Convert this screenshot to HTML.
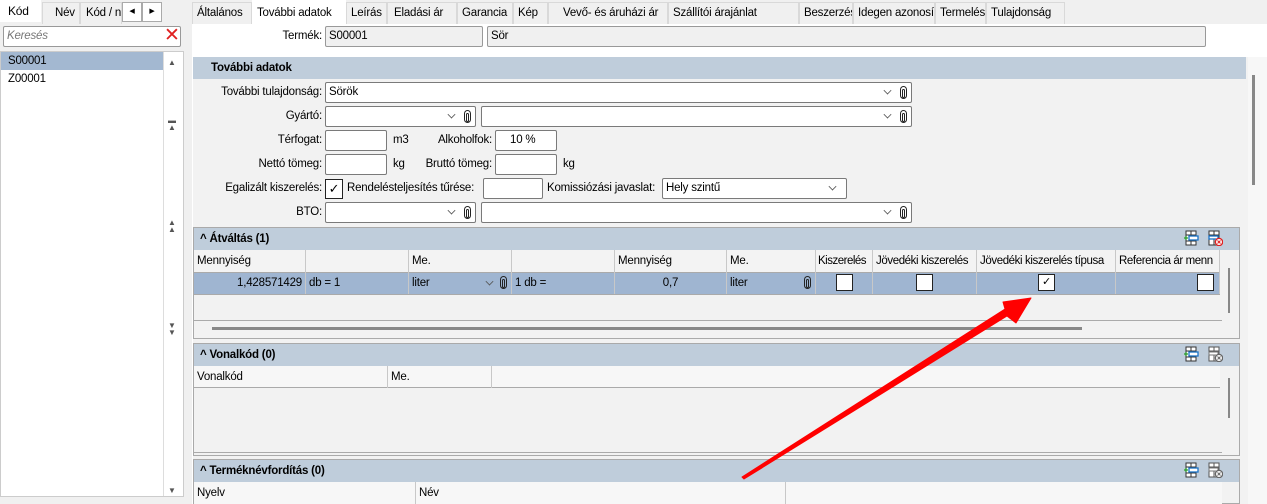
<!DOCTYPE html>
<html><head><meta charset="utf-8"><style>
*{box-sizing:border-box;margin:0;padding:0}
body{width:1267px;height:504px;overflow:hidden;background:#f0f0f0;font-family:"Liberation Sans",sans-serif;font-size:11.5px;letter-spacing:-0.2px;color:#000;position:relative}
.a{position:absolute}
.tab{position:absolute;top:2px;height:22px;line-height:20px;background:#f0f0f0;border:1px solid #d9d9d9;border-bottom:none;text-align:left;padding-left:4px;white-space:nowrap;overflow:hidden}
.inp{position:absolute;height:21px;background:#fff;border:1px solid #7a7a7a;border-radius:2px;padding-left:3px;line-height:19px;white-space:nowrap;overflow:hidden}
.lbl{position:absolute;text-align:right;white-space:nowrap;line-height:20px}
.dd{position:absolute;right:20px;top:4px;width:7px;height:7px;border-right:1px solid #555;border-bottom:1px solid #555;transform:rotate(45deg) scale(.8)}
.clip{position:absolute;right:4px;top:3px;width:7px;height:13px;border:1.5px solid #222;border-radius:4px}
.clip:after{content:"";position:absolute;left:1px;top:2px;width:1px;height:7px;border:1px solid #222;border-radius:2px}
.hdr{position:absolute;background:#bfcddb;font-weight:bold;line-height:22px;padding-left:6px}
.gh{position:absolute;top:0;height:22px;border-right:1px solid #c8c8c8;line-height:22px;padding-left:3px;white-space:nowrap;overflow:hidden;background:#f3f3f3}
.gr{position:absolute;height:22px;border-right:1px solid #c8c8c8;line-height:22px;padding:0 3px;white-space:nowrap;overflow:hidden}
.cb{position:absolute;width:17px;height:17px;background:#fff;border:1px solid #222}
.ic{position:absolute;width:16px;height:16px}
.ar{position:absolute;left:168px;font-size:8px;color:#555;line-height:7px;letter-spacing:0}
</style></head><body>
<div class="a" style="left:0;top:0;width:186px;height:504px;background:#f0f0f0"></div>
<div class="tab" style="left:0;top:0;width:41px;background:#fff;border-color:#fff;padding-left:7px;font-size:12px">Kód</div>
<div class="tab" style="left:42px;top:2px;width:38px;padding-left:12px">Név</div>
<div class="tab" style="left:80px;top:2px;width:42px;padding-left:5px">Kód / né</div>
<div class="a" style="left:122px;top:2px;width:20px;height:20px;background:#fff;border:1px solid #aaa;font-size:7px;text-align:center;line-height:18px">◀</div>
<div class="a" style="left:142px;top:2px;width:20px;height:20px;background:#fff;border:1px solid #aaa;font-size:7px;text-align:center;line-height:18px">▶</div>
<div class="inp" style="left:3px;top:26px;width:178px;height:21px;border-color:#999;color:#777;font-style:italic">Keresés</div>
<div class="a" style="left:164px;top:26px;font-size:19px;color:#e02020;line-height:20px">✕</div>
<div class="a" style="left:0;top:51px;width:184px;height:446px;background:#fff;border:1px solid #ccc"></div>
<div class="a" style="left:1px;top:52px;width:162px;height:18px;background:#a3b8d1;padding-left:7px;line-height:18px">S00001</div>
<div class="a" style="left:1px;top:70px;width:162px;height:18px;padding-left:7px;line-height:18px">Z00001</div>
<div class="a" style="left:163px;top:52px;width:20px;height:444px;border-left:1px solid #ddd;background:#fff"></div>
<div class="ar" style="top:59px">▲</div>
<div class="ar" style="top:117px">▬<br>▲</div>
<div class="ar" style="top:219px">▲<br>▲</div>
<div class="ar" style="top:322px">▼<br>▼</div>
<div class="ar" style="top:487px">▼</div>

<div class="tab" style="left:192px;width:60px">Általános</div>
<div class="tab" style="left:252px;top:0;height:25px;width:94px;background:#fff;border-color:#fff;padding-top:2px">További adatok</div>
<div class="tab" style="left:346px;width:41px">Leírás</div>
<div class="tab" style="left:387px;width:70px;padding-left:6px">Eladási ár</div>
<div class="tab" style="left:457px;width:56px">Garancia</div>
<div class="tab" style="left:513px;width:35px">Kép</div>
<div class="tab" style="left:548px;width:120px;padding-left:14px">Vevő- és áruházi ár</div>
<div class="tab" style="left:668px;width:131px">Szállítói árajánlat</div>
<div class="tab" style="left:799px;width:54px">Beszerzés</div>
<div class="tab" style="left:853px;width:82px">Idegen azonosító</div>
<div class="tab" style="left:935px;width:51px">Termelés</div>
<div class="tab" style="left:986px;width:79px">Tulajdonság</div>

<div class="a" style="left:192px;top:24px;width:1075px;height:480px;background:#fff"></div>
<div class="lbl" style="left:200px;width:122px;top:26px">Termék:</div>
<div class="inp" style="left:325px;top:26px;width:158px;background:#f0f0f0;border-color:#999">S00001</div>
<div class="inp" style="left:487px;top:26px;width:719px;background:#f0f0f0;border-color:#999">Sör</div>

<div class="a" style="left:193px;top:57px;width:1055px;height:447px;background:#f2f2f2"></div>
<div class="a" style="left:1248px;top:57px;width:19px;height:447px;background:#f7f7f7"></div>
<div class="a" style="left:1252px;top:75px;width:3px;height:110px;background:#888"></div>
<div class="hdr" style="left:193px;top:57px;width:1053px;height:22px;padding-left:18px">További adatok</div>

<div class="lbl" style="left:200px;width:122px;top:82px">További tulajdonság:</div>
<div class="inp" style="left:325px;top:82px;width:587px">Sörök<span class="dd"></span><span class="clip"></span></div>
<div class="lbl" style="left:200px;width:122px;top:106px">Gyártó:</div>
<div class="inp" style="left:325px;top:106px;width:151px"><span class="dd"></span><span class="clip"></span></div>
<div class="inp" style="left:481px;top:106px;width:431px"><span class="dd"></span><span class="clip"></span></div>
<div class="lbl" style="left:200px;width:122px;top:130px">Térfogat:</div>
<div class="inp" style="left:325px;top:130px;width:62px"></div>
<div class="lbl" style="left:393px;top:130px">m3</div>
<div class="lbl" style="left:400px;width:92px;top:130px">Alkoholfok:</div>
<div class="inp" style="left:495px;top:130px;width:62px;padding-left:14px">10 %</div>
<div class="lbl" style="left:200px;width:122px;top:154px">Nettó tömeg:</div>
<div class="inp" style="left:325px;top:154px;width:62px"></div>
<div class="lbl" style="left:393px;top:154px">kg</div>
<div class="lbl" style="left:400px;width:92px;top:154px">Bruttó tömeg:</div>
<div class="inp" style="left:495px;top:154px;width:62px"></div>
<div class="lbl" style="left:563px;top:154px">kg</div>
<div class="lbl" style="left:200px;width:122px;top:178px">Egalizált kiszerelés:</div>
<div class="cb" style="left:325px;top:179px;width:18px;height:20px;font-size:13px;text-align:center;line-height:18px">✓</div>
<div class="lbl" style="left:347px;top:178px">Rendelésteljesítés tűrése:</div>
<div class="inp" style="left:483px;top:178px;width:60px"></div>
<div class="lbl" style="left:547px;top:178px">Komissiózási javaslat:</div>
<div class="inp" style="left:662px;top:178px;width:185px">Hely szintű<span class="dd" style="right:10px"></span></div>
<div class="lbl" style="left:200px;width:122px;top:202px">BTO:</div>
<div class="inp" style="left:325px;top:202px;width:151px"><span class="dd"></span><span class="clip"></span></div>
<div class="inp" style="left:481px;top:202px;width:431px"><span class="dd"></span><span class="clip"></span></div>

<div class="a" style="left:193px;top:227px;width:1047px;height:112px;border:1px solid #aaa;background:#f2f2f2"></div>
<div class="hdr" style="left:194px;top:228px;width:1045px;height:22px">^ Átváltás (1)</div>
<svg class="ic" style="left:1183px;top:230px" viewBox="0 0 16 16"><rect x="3" y="1" width="10" height="14" fill="#fff" stroke="#333"/><path d="M3 5h10M3 11h10M8 1v14" stroke="#333"/><rect x="6" y="6" width="9" height="4" fill="#fff" stroke="#1a73c7" stroke-width="1.3"/><path d="M1 8h4M3 6v4" stroke="#2a9a2a" stroke-width="1.3"/></svg>
<svg class="ic" style="left:1207px;top:230px" viewBox="0 0 16 16"><rect x="2" y="1" width="10" height="14" fill="#fff" stroke="#333"/><path d="M2 5h10M7 1v14" stroke="#333"/><rect x="2" y="6" width="9" height="3" fill="#fff" stroke="#1a73c7" stroke-width="1.3"/><circle cx="12" cy="12" r="3.6" fill="#fff" stroke="#e02020" stroke-width="1.3"/><path d="M10.5 10.5l3 3M13.5 10.5l-3 3" stroke="#e02020"/></svg>
<div class="a" style="left:194px;top:250px;width:1028px;height:71px;background:#f2f2f2;border-bottom:1px solid #aaa;overflow:hidden">
<div class="gh" style="left:0;width:112px">Mennyiség</div><div class="gh" style="left:112px;width:103px"></div><div class="gh" style="left:215px;width:103px">Me.</div><div class="gh" style="left:318px;width:103px"></div><div class="gh" style="left:421px;width:112px">Mennyiség</div><div class="gh" style="left:533px;width:89px">Me.</div><div class="gh" style="left:622px;width:57px;padding-left:2px;letter-spacing:-0.5px">Kiszerelés</div><div class="gh" style="left:679px;width:104px;letter-spacing:-0.4px">Jövedéki kiszerelés</div><div class="gh" style="left:783px;width:139px;letter-spacing:-0.4px">Jövedéki kiszerelés típusa</div><div class="gh" style="left:922px;width:104px;letter-spacing:-0.4px">Referencia ár menn</div>
<div class="a" style="left:0;top:22px;width:1026px;height:23px;background:#9fb5d1;border-top:1px solid #aaa;border-bottom:1px solid #aaa"></div>
<div class="gr" style="left:0;top:22px;width:112px;text-align:right">1,428571429</div><div class="gr" style="left:112px;top:22px;width:103px">db = 1</div><div class="gr" style="left:215px;top:22px;width:103px">liter<span class="dd" style="right:18px;top:6px"></span><span class="clip" style="top:4px"></span></div><div class="gr" style="left:318px;top:22px;width:103px">1 db =</div><div class="gr" style="left:421px;top:22px;width:112px;text-align:center">0,7</div><div class="gr" style="left:533px;top:22px;width:89px">liter<span class="clip" style="top:4px"></span></div><div class="gr" style="left:622px;top:22px;width:57px"></div><div class="gr" style="left:679px;top:22px;width:104px"></div><div class="gr" style="left:783px;top:22px;width:139px"></div><div class="gr" style="left:922px;top:22px;width:104px"></div>
<div class="cb" style="left:642px;top:24px"></div><div class="cb" style="left:722px;top:24px"></div><div class="cb" style="left:844px;top:24px;font-size:11px;text-align:center;line-height:15px">✓</div><div class="cb" style="left:1003px;top:24px"></div>
</div>
<div class="a" style="left:1228px;top:268px;width:2px;height:45px;background:#888"></div>
<div class="a" style="left:212px;top:327px;width:870px;height:3px;background:#888"></div>

<div class="a" style="left:193px;top:343px;width:1047px;height:113px;border:1px solid #aaa;background:#f2f2f2"></div>
<div class="hdr" style="left:194px;top:344px;width:1045px;height:22px">^ Vonalkód (0)</div>
<svg class="ic" style="left:1183px;top:346px" viewBox="0 0 16 16"><rect x="3" y="1" width="10" height="14" fill="#fff" stroke="#333"/><path d="M3 5h10M3 11h10M8 1v14" stroke="#333"/><rect x="6" y="6" width="9" height="4" fill="#fff" stroke="#1a73c7" stroke-width="1.3"/><path d="M1 8h4M3 6v4" stroke="#2a9a2a" stroke-width="1.3"/></svg>
<svg class="ic" style="left:1207px;top:346px" viewBox="0 0 16 16"><rect x="2" y="1" width="10" height="14" fill="#fff" stroke="#555"/><path d="M2 5h10M7 1v14" stroke="#555"/><rect x="2" y="6" width="9" height="3" fill="#fff" stroke="#777"/><circle cx="12" cy="12" r="3.6" fill="#fff" stroke="#666" stroke-width="1.3"/><path d="M10.5 10.5l3 3M13.5 10.5l-3 3" stroke="#666"/></svg>
<div class="a" style="left:194px;top:366px;width:1028px;height:87px;border-bottom:1px solid #aaa;overflow:hidden">
<div class="a" style="left:0;top:0;width:1026px;height:22px;background:#f7f7f7;border-bottom:1px solid #aaa"></div>
<div class="gh" style="left:0;width:194px;background:none">Vonalkód</div><div class="gh" style="left:194px;width:104px;background:none">Me.</div>
</div>
<div class="a" style="left:1228px;top:378px;width:2px;height:40px;background:#888"></div>

<div class="a" style="left:193px;top:459px;width:1047px;height:45px;border:1px solid #aaa;background:#f2f2f2"></div>
<div class="hdr" style="left:194px;top:460px;width:1045px;height:22px">^ Terméknévfordítás (0)</div>
<svg class="ic" style="left:1183px;top:462px" viewBox="0 0 16 16"><rect x="3" y="1" width="10" height="14" fill="#fff" stroke="#333"/><path d="M3 5h10M3 11h10M8 1v14" stroke="#333"/><rect x="6" y="6" width="9" height="4" fill="#fff" stroke="#1a73c7" stroke-width="1.3"/><path d="M1 8h4M3 6v4" stroke="#2a9a2a" stroke-width="1.3"/></svg>
<svg class="ic" style="left:1207px;top:462px" viewBox="0 0 16 16"><rect x="2" y="1" width="10" height="14" fill="#fff" stroke="#555"/><path d="M2 5h10M7 1v14" stroke="#555"/><rect x="2" y="6" width="9" height="3" fill="#fff" stroke="#777"/><circle cx="12" cy="12" r="3.6" fill="#fff" stroke="#666" stroke-width="1.3"/><path d="M10.5 10.5l3 3M13.5 10.5l-3 3" stroke="#666"/></svg>
<div class="a" style="left:194px;top:482px;width:1028px;height:22px;background:#f7f7f7;overflow:hidden">
<div class="gh" style="left:0;width:222px;background:none">Nyelv</div><div class="gh" style="left:222px;width:370px;background:none">Név</div>
</div>

<svg class="a" style="left:0;top:0" width="1267" height="504"><polygon points="744,479 1007,316 1016,323 1031,298 1003,302 1005,309 742,477" fill="#ff0000" stroke="#ff0000" stroke-width="1" stroke-linejoin="round"/></svg>
</body></html>
